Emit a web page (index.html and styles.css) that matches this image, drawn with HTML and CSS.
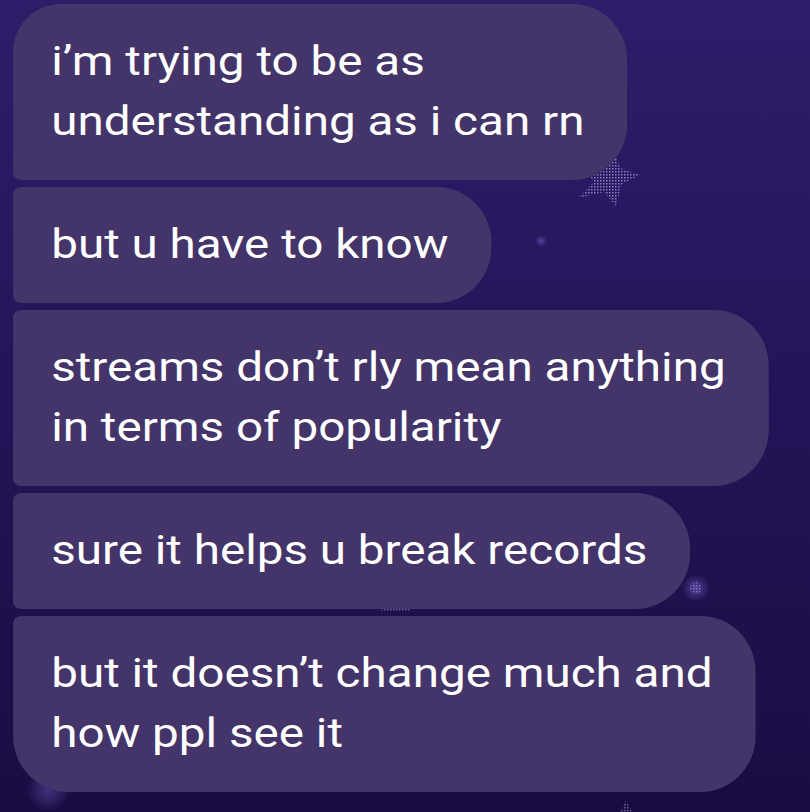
FILE: index.html
```html
<!DOCTYPE html>
<html lang="en">
<head>
    <meta charset="UTF-8">
    <title>chat</title>
    <link rel="stylesheet" href="styles.css">
</head>
<body>
    <!-- background sparkles -->
    <svg class="sky" width="810" height="812" viewBox="0 0 810 812">
        <defs>
            <pattern id="dots" width="3" height="3" patternUnits="userSpaceOnUse">
                <rect width="1.5" height="1.5" fill="#a996d6"/>
            </pattern>
            <radialGradient id="glow">
                <stop offset="0" stop-color="#5a47a0" stop-opacity=".9"/>
                <stop offset="1" stop-color="#5a47a0" stop-opacity="0"/>
            </radialGradient>
        </defs>
        <path d="M614 150 L620 168 L640 175 L622 184 L616 206 L604 192 L578 198 L594 182 L584 168 L604 170 Z" fill="url(#dots)" opacity=".8"/>
        <circle cx="541" cy="241" r="6" fill="url(#glow)"/>
        <circle cx="696" cy="588" r="14" fill="url(#glow)"/>
        <circle cx="696" cy="588" r="6" fill="url(#dots)" opacity=".6"/>
        <path d="M374 612 L400 604 L414 612 Z" fill="url(#dots)" opacity=".6"/>
        <circle cx="48" cy="790" r="22" fill="url(#glow)" opacity=".7"/>
        <path d="M620 812 L626 800 L632 812 Z" fill="url(#dots)" opacity=".6"/>
    </svg>

    <div class="chat">
        <div class="bubble first">i’m trying to be as<br>understanding as i can rn</div>
        <div class="bubble">but u have to know</div>
        <div class="bubble">streams don’t rly mean anything<br>in terms of popularity</div>
        <div class="bubble">sure it helps u break records</div>
        <div class="bubble last">but it doesn’t change much and<br>how ppl see it</div>
    </div>
</body>
</html>
```

FILE: styles.css
```css
body {
    position: relative;
    margin: 0;
    width: 810px;
    height: 812px;
    overflow: hidden;
    background: linear-gradient(#2e1d69, #24155a 45%, #1a0c42);
    font-family: Roboto, "Noto Sans", sans-serif;
}

.sky {
    position: absolute;
    left: 0;
    top: 0;
}

/* the capture is a little stretched sideways, so the whole column is too */
.chat {
    box-sizing: border-box;
    width: 680px;
    display: flex;
    flex-direction: column;
    align-items: flex-start;
    gap: 7px;
    padding: 4px 0 0 11px;
    transform: scaleX(1.19);
    transform-origin: 0 0;
}

.bubble {
    position: relative;
    background: #433469;
    color: #ffffff;
    font-size: 40px;
    line-height: 60px;
    padding: 28px 36px 28px 32px;
    border-radius: 7px 46px 46px 7px / 7px 56px 56px 7px;
    white-space: nowrap;
}

.bubble.first {
    border-top-left-radius: 40px 48px;
}

.bubble.last {
    border-bottom-left-radius: 46px 56px;
}
```
